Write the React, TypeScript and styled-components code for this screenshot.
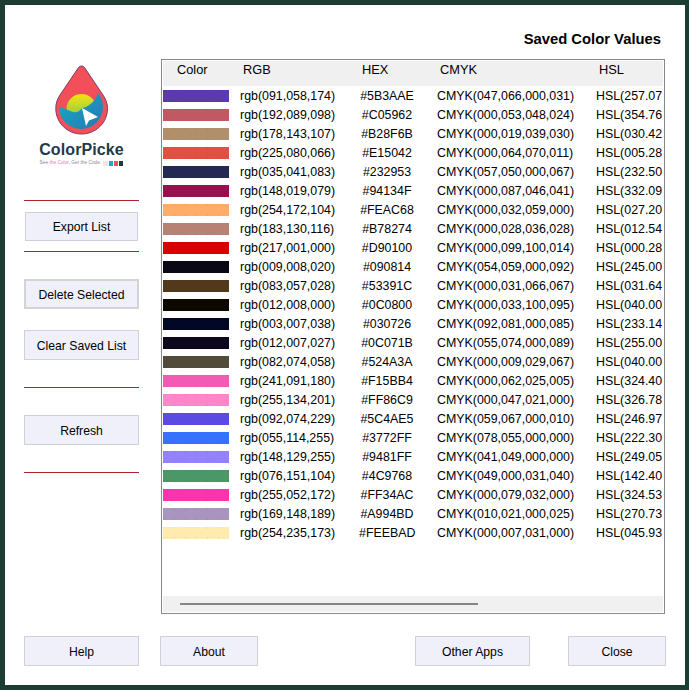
import React from "react";
import styled, { createGlobalStyle } from "styled-components";

const Global = createGlobalStyle`
  html, body { margin: 0; padding: 0; background: #fff; }
  body { font-family: "Liberation Sans", Arial, sans-serif; color: #000; }
`;

const Frame = styled.div`
  box-sizing: border-box;
  width: 689px;
  height: 690px;
  border-style: solid;
  border-color: #1c3d32;
  border-width: 5px 4px 5px 5px;
  background: #fff;
  padding: 0 0 0 19px;
  display: flex;
  flex-direction: column;
  overflow: hidden;
`;

const Top = styled.div`
  display: flex;
  height: 609px;
`;

const Sidebar = styled.aside`
  width: 115px;
  flex: none;
  padding-top: 60px;
  display: flex;
  flex-direction: column;
`;

const Logo = styled.div`
  height: 135px;
  display: flex;
  flex-direction: column;
  align-items: center;
`;

const Brand = styled.div`
  margin-top: 6px;
  font-size: 16px;
  line-height: 18px;
  font-weight: 700;
  letter-spacing: 0.1px;
  color: #1f3a4a;
`;

const TagRow = styled.div`
  display: flex;
  align-items: center;
  gap: 1px;
  height: 6px;
  margin-top: 1px;
`;

const Tag = styled.span`
  font-size: 4.8px;
  line-height: 6px;
  color: #8a8a9a;
  margin-right: 1px;
  white-space: nowrap;
`;

const TagPink = styled.span`
  color: #e77ab8;
`;

const TagDot = styled.i<{ $c: string }>`
  display: block;
  width: 4.3px;
  height: 5px;
  background: ${(p) => p.$c};
`;

const Divider = styled.hr<{ $top: number }>`
  border: 0;
  margin: ${(p) => p.$top}px 0 0;
  height: 1px;
  background: #b22222;
`;

const Button = styled.button<{ $w?: number; $top?: number; $left?: number; $strong?: boolean }>`
  box-sizing: border-box;
  display: block;
  flex: none;
  width: ${(p) => p.$w ?? 115}px;
  height: 30px;
  margin: ${(p) => p.$top ?? 0}px 0 0 ${(p) => p.$left ?? 0}px;
  padding: 2px 0 0;
  background: #f0f0fa;
  border: ${(p) => (p.$strong ? "2px solid #d3d3d3" : "1px solid #d0d0d8")};
  font-family: "Liberation Sans", Arial, sans-serif;
  font-size: 12.2px;
  color: #000;
`;

const ExportButton = styled(Button)`
  width: 113px;
  height: 29px;
  margin-left: 1px;
  padding-top: 0;
`;

const Main = styled.main`
  width: 504px;
  margin-left: 22px;
  flex: none;
  display: flex;
  flex-direction: column;
`;

const Title = styled.h1`
  margin: 0;
  height: 54px;
  box-sizing: border-box;
  padding: 26px 4px 0 0;
  text-align: right;
  font-size: 14.8px;
  line-height: 16px;
  font-weight: 700;
`;

const ListBox = styled.div`
  box-sizing: border-box;
  height: 556px;
  border: 1px solid #888;
  padding: 1px;
  display: flex;
  flex-direction: column;
  overflow: hidden;
`;

const columns = "77px 119px 78px 159px 1fr";

const HeaderRow = styled.div`
  display: grid;
  grid-template-columns: ${columns};
  height: 25px;
  flex: none;
  background: #f0f0f0;
  font-size: 12.8px;
  line-height: 17px;
`;

const HeaderCell = styled.div<{ $pad: number }>`
  padding-left: ${(p) => p.$pad}px;
`;

const Rows = styled.div`
  flex: 1;
  padding-top: 1px;
  overflow: hidden;
`;

const Row = styled.div`
  display: grid;
  grid-template-columns: ${columns};
  height: 19px;
  align-items: center;
  font-size: 12.4px;
  white-space: nowrap;
`;

const Swatch = styled.div<{ $c: string }>`
  width: 66px;
  height: 12px;
  background-color: ${(p) => p.$c};
  background-image:
    repeating-linear-gradient(90deg, rgba(0, 0, 0, 0.06) 0 1px, transparent 1px 11px),
    repeating-linear-gradient(90deg, rgba(0, 0, 0, 0.06) 0 1px, transparent 1px 11px);
  background-size: 100% 2px, 100% 2px;
  background-position: top left, bottom left;
  background-repeat: no-repeat;
`;

const HexCell = styled.div`
  padding-right: 22px;
  text-align: center;
`;

const Clip = styled.div`
  overflow: hidden;
`;

const ScrollTrack = styled.div`
  flex: none;
  height: 16px;
  background: #f0f0f0;
  padding: 7px 0 0 17px;
  box-sizing: border-box;
`;

const ScrollThumb = styled.div`
  width: 298px;
  height: 2px;
  background: #858585;
`;

const Footer = styled.footer`
  display: flex;
  padding-top: 22px;
`;

const data: [string, string, string, string][] = [
  ["091,058,174", "#5B3AAE", "047,066,000,031", "257.07"],
  ["192,089,098", "#C05962", "000,053,048,024", "354.76"],
  ["178,143,107", "#B28F6B", "000,019,039,030", "030.42"],
  ["225,080,066", "#E15042", "000,064,070,011", "005.28"],
  ["035,041,083", "#232953", "057,050,000,067", "232.50"],
  ["148,019,079", "#94134F", "000,087,046,041", "332.09"],
  ["254,172,104", "#FEAC68", "000,032,059,000", "027.20"],
  ["183,130,116", "#B78274", "000,028,036,028", "012.54"],
  ["217,001,000", "#D90100", "000,099,100,014", "000.28"],
  ["009,008,020", "#090814", "054,059,000,092", "245.00"],
  ["083,057,028", "#53391C", "000,031,066,067", "031.64"],
  ["012,008,000", "#0C0800", "000,033,100,095", "040.00"],
  ["003,007,038", "#030726", "092,081,000,085", "233.14"],
  ["012,007,027", "#0C071B", "055,074,000,089", "255.00"],
  ["082,074,058", "#524A3A", "000,009,029,067", "040.00"],
  ["241,091,180", "#F15BB4", "000,062,025,005", "324.40"],
  ["255,134,201", "#FF86C9", "000,047,021,000", "326.78"],
  ["092,074,229", "#5C4AE5", "059,067,000,010", "246.97"],
  ["055,114,255", "#3772FF", "078,055,000,000", "222.30"],
  ["148,129,255", "#9481FF", "041,049,000,000", "249.05"],
  ["076,151,104", "#4C9768", "049,000,031,040", "142.40"],
  ["255,052,172", "#FF34AC", "000,079,032,000", "324.53"],
  ["169,148,189", "#A994BD", "010,021,000,025", "270.73"],
  ["254,235,173", "#FEEBAD", "000,007,031,000", "045.93"],
];

const DropIcon = () => (
  <svg width="54" height="70" viewBox="0 0 54 70" style={{ display: "block" }}>
    <defs>
      <linearGradient id="sun" x1="0" y1="0" x2="0" y2="1">
        <stop offset="0" stopColor="#f4e60f" />
        <stop offset="1" stopColor="#6fc05a" />
      </linearGradient>
      <linearGradient id="basin" x1="0" y1="0" x2="1" y2="1">
        <stop offset="0" stopColor="#12b0c4" />
        <stop offset="1" stopColor="#2a6fb0" />
      </linearGradient>
      <clipPath id="inner">
        <circle cx="26" cy="42" r="22" />
      </clipPath>
    </defs>
    <path
      d="M26.5 1 C24.5 1 23.5 2.5 22.5 4 L5 30 C2 34.5 .8 38.5 .8 43.5 C.8 58 12.5 69 26.5 69 C40.5 69 52.5 58 52.5 43.5 C52.5 38.5 51 34.5 48 30 L30.5 4 C29.5 2.5 28.5 1 26.5 1 Z"
      fill="#f24f58"
      stroke="#7d3a6e"
      strokeWidth="1"
    />
    <circle cx="26.5" cy="44" r="15" fill="url(#sun)" />
    <path
      clipPath="url(#inner)"
      d="M3 41 C8 42.5 13 46 18 47 C22 48 25 46 27 43 C34 42 41 36 43 27 L52 40 L50 70 L3 70 Z"
      fill="url(#basin)"
    />
    <path d="M27 43 L43 52 L34 55.5 L31 61 Z" fill="#fff" />
  </svg>
);

export default function App() {
  return (
    <Frame>
      <Global />
      <Top>
        <Sidebar>
          <Logo>
            <DropIcon />
            <Brand>ColorPicke</Brand>
            <TagRow>
              <Tag>
                See <TagPink>the Color,</TagPink> Get the Code.
              </Tag>
              <TagDot $c="#e8e8e8" />
              <TagDot $c="#00b8c8" />
              <TagDot $c="#f05060" />
              <TagDot $c="#1f3a4a" />
            </TagRow>
          </Logo>
          <Divider $top={0} />
          <ExportButton $top={11}>Export List</ExportButton>
          <Divider $top={10} />
          <Button $top={27} $strong>Delete Selected</Button>
          <Button $top={21}>Clear Saved List</Button>
          <Divider $top={27} />
          <Button $top={27}>Refresh</Button>
          <Divider $top={27} />
        </Sidebar>
        <Main>
          <Title>Saved Color Values</Title>
          <ListBox>
            <HeaderRow>
              <HeaderCell $pad={14}>Color</HeaderCell>
              <HeaderCell $pad={3}>RGB</HeaderCell>
              <HeaderCell $pad={3}>HEX</HeaderCell>
              <HeaderCell $pad={3}>CMYK</HeaderCell>
              <HeaderCell $pad={3}>HSL</HeaderCell>
            </HeaderRow>
            <Rows>
              {data.map(([rgb, hex, cmyk, hsl]) => (
                <Row key={hex}>
                  <Swatch $c={hex} />
                  <div>rgb({rgb})</div>
                  <HexCell>{hex}</HexCell>
                  <div>CMYK({cmyk})</div>
                  <Clip>HSL({hsl}</Clip>
                </Row>
              ))}
            </Rows>
            <ScrollTrack>
              <ScrollThumb />
            </ScrollTrack>
          </ListBox>
        </Main>
      </Top>
      <Footer>
        <Button>Help</Button>
        <Button $w={98} $left={21}>About</Button>
        <Button $left={157}>Other Apps</Button>
        <Button $w={98} $left={38}>Close</Button>
      </Footer>
    </Frame>
  );
}
